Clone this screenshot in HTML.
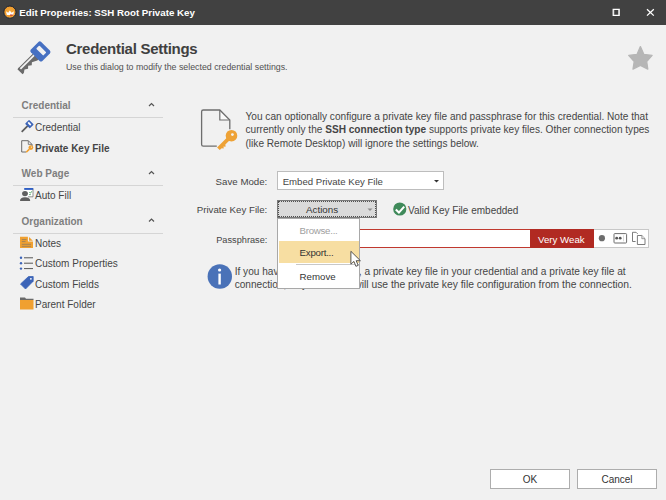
<!DOCTYPE html>
<html><head><meta charset="utf-8">
<style>
html,body{margin:0;padding:0;}
body{width:666px;height:500px;overflow:hidden;background:#f1f1f1;position:relative;font-family:"Liberation Sans",sans-serif;color:#454545;}
.a{position:absolute;white-space:nowrap;}
svg{position:absolute;overflow:visible;}
#tb{left:0;top:0;width:666px;height:25px;background:#414141;}
.t10{font-size:10px;line-height:12px;}
.sh{font-size:10px;line-height:12px;font-weight:bold;color:#7e7e7e;}
.sep{position:absolute;height:1px;background:#d5d5d5;left:13px;width:150px;}
.chev{position:absolute;}
.lbl{font-size:9.7px;line-height:12px;text-align:right;}
</style></head><body>
<div id="tb" class="a"></div>
<!-- app icon -->
<svg style="left:0;top:0" width="30" height="25">
  <defs><radialGradient id="og" cx="0.5" cy="0.45" r="0.55"><stop offset="0" stop-color="#f6ab3c"/><stop offset="0.8" stop-color="#ee9a2c"/><stop offset="1" stop-color="#f5c27a"/></radialGradient></defs>
  <circle cx="9.9" cy="12.1" r="6.1" fill="url(#og)" stroke="#1b2130" stroke-width="1"/>
  <path d="M6 11.2 L8.2 12.8 L9.8 10.6 L11.6 12.8 L14 11.2 L13.2 15 L6.8 15 Z" fill="#fff"/>
  <path d="M10 14.6 L12.9 14.6 L12.6 15.7 L10.2 15.7 Z" fill="#c8402e"/>
</svg>
<div class="a" style="left:19.3px;top:6.2px;font-size:9.72px;line-height:13px;font-weight:bold;color:#fff;">Edit Properties: SSH Root Private Key</div>
<!-- maximize -->
<svg style="left:0;top:0" width="666" height="25">
  <path d="M613.2 9.4 H619.2 V15.3 H613.2 Z" fill="none" stroke="#fff" stroke-width="1.25"/>
  <path d="M613.9 9.8 V14.9 M618.5 9.8 V14.9" stroke="#fff" stroke-width="0.5"/>
  <path d="M647 9.2 L653.8 15.6 M653.8 9.2 L647 15.6" stroke="#fff" stroke-width="1.3"/>
</svg>

<!-- header key icon -->
<svg style="left:0;top:0" width="60" height="80">
  <g transform="translate(40.6 51.65) rotate(-45)">
    <path d="M-7 -4.0 L-28 -4.0 L-28 -3.0 L-7 -3.0 Z" fill="#666"/>
    <path d="M-6 -1.2 L-26.5 -1.2 L-26.5 -4.0 L-28.8 -4.0 L-28.8 3.3 L-27 3.3 L-24 1.2 L-21 3.3 L-18.8 1.2 L-15.8 3.3 L-13.6 1.3 L-8.5 3.9 L-6 3.9 Z" fill="#6b6b6b"/>
    <rect x="-7.3" y="-8.4" width="14.6" height="16.2" rx="2" fill="#4670c2"/>
    <rect x="-1" y="-5.3" width="4.5" height="10" rx="0.8" fill="#f1f1f1"/>
  </g>
</svg>
<div class="a" style="left:66px;top:39.6px;font-size:15px;line-height:17px;font-weight:bold;color:#404040;letter-spacing:-0.28px;">Credential Settings</div>
<div class="a" style="left:66px;top:61.7px;font-size:8.8px;line-height:11px;color:#505050;">Use this dialog to modify the selected credential settings.</div>
<!-- star -->
<svg style="left:0;top:0" width="666" height="80">
  <path d="M640.4 46.6 L643.8 54.3 L652.1 55.4 L646.7 61.5 L647.8 69.1 L640.4 65.5 L633 69.1 L634.2 61.5 L628.7 55.4 L637.1 54.3 Z" fill="#b6b6b6" stroke="#b6b6b6" stroke-width="1.3" stroke-linejoin="round"/>
</svg>

<!-- sidebar -->
<div class="a sh" style="left:21.6px;top:100.3px;">Credential</div>
<svg style="left:0;top:0" width="180" height="320">
  <path d="M149 106 L151.5 103.5 L154 106" fill="none" stroke="#555" stroke-width="1.2"/>
  <path d="M149 174 L151.5 171.5 L154 174" fill="none" stroke="#555" stroke-width="1.2"/>
  <path d="M149 221.5 L151.5 219 L154 221.5" fill="none" stroke="#555" stroke-width="1.2"/>
</svg>
<div class="sep" style="top:117px;"></div>
<svg style="left:0;top:0" width="40" height="320">
  <g transform="translate(29.4 124.1) rotate(-45)">
    <rect x="-11" y="-0.8" width="8.5" height="1.8" fill="#5d5d5d"/>
    <rect x="-2.8" y="-3.3" width="5.6" height="6.6" rx="0.6" fill="#3c64b8"/>
    <rect x="-0.6" y="-2" width="1.8" height="3.6" fill="#fff"/>
  </g>
  <!-- doc small -->
  <path d="M21.7 140.7 L28.3 140.7 L32 144.4 L32 146" fill="none" stroke="#6a6a6a" stroke-width="1"/>
  <path d="M21.7 140.7 L21.7 152 L26 152" fill="none" stroke="#6a6a6a" stroke-width="1"/>
  <path d="M28.3 140.7 L28.3 144.4 L32 144.4" fill="none" stroke="#6a6a6a" stroke-width="0.8"/>
  <circle cx="30.9" cy="147.6" r="2.4" fill="#f0a030"/>
  <circle cx="31.4" cy="147.1" r="0.6" fill="#f1f1f1"/>
  <path d="M29.4 149.1 L26.2 152.3" stroke="#f0a030" stroke-width="1.6"/>
  <path d="M27.3 150 L28.3 151" stroke="#f0a030" stroke-width="1"/>
</svg>
<div class="a t10" style="left:35px;top:122.3px;">Credential</div>
<div class="a t10" style="left:35px;top:142.7px;font-weight:bold;">Private Key File</div>

<div class="a sh" style="left:21.6px;top:167.9px;">Web Page</div>
<div class="sep" style="top:185px;"></div>
<svg style="left:0;top:0" width="40" height="320">
  <rect x="24.2" y="188" width="8.8" height="8.8" fill="#fff"/>
  <path d="M33 188.5 L33 196.8 L28 196.8" fill="none" stroke="#777" stroke-width="0.8"/>
  <rect x="24.2" y="188" width="9" height="1.9" fill="#2f5fc4"/>
  <path d="M29.3 192.4 l1.2 0.4 l1.6 -1.4 M29.2 194.6 l1.5 0" stroke="#3a9a50" stroke-width="0.9" fill="none"/>
  <ellipse cx="25" cy="193.6" rx="2.9" ry="2.6" fill="#5f5f5f"/>
  <path d="M20 200.9 Q20 197.2 25 197.2 Q30.2 197.2 30.2 200.9 Z" fill="#5f5f5f"/>
</svg>
<div class="a t10" style="left:35px;top:190px;">Auto Fill</div>

<div class="a sh" style="left:21.6px;top:215.9px;">Organization</div>
<div class="sep" style="top:233px;"></div>
<svg style="left:0;top:0" width="40" height="320">
  <!-- notes -->
  <path d="M20 236.8 L27.9 236.8 L27.9 241.6 L33 241.6 L33 248 L20 248 Z" fill="#f0a030"/>
  <path d="M29 236.9 L29 240.7 L32.9 240.7 Z" fill="#f0a030"/>
  <path d="M21.8 239.6 H26.5 M21.8 241.6 H25.5 M21.8 244.3 H31 M21.8 246.3 H31" stroke="#9a7f5a" stroke-width="0.9"/>
  <!-- custom props -->
  <circle cx="21" cy="257.8" r="1.2" fill="#3c64b8"/>
  <circle cx="21" cy="263.2" r="1.2" fill="#3c64b8"/>
  <circle cx="21" cy="268.6" r="1.2" fill="#3c64b8"/>
  <path d="M24 257.8 H33 M24 263.2 H33 M24 268.6 H33" stroke="#555" stroke-width="1"/>
  <!-- tag -->
  <path d="M28.5 276.5 L33.2 276.5 L33.2 281.2 L25.5 289 L20.5 284 Z" fill="#3c64b8" stroke="#3c64b8" stroke-width="0.8" stroke-linejoin="round"/>
  <circle cx="30.9" cy="278.8" r="0.9" fill="#fff"/>
  <!-- folder -->
  <path d="M20 297.5 L25 297.5 L26 298.8 L33.5 298.8 L33.5 300 L20 300 Z" fill="#6a6a6a"/>
  <rect x="20" y="300" width="13.5" height="9.5" fill="#f0a030"/>
</svg>
<div class="a t10" style="left:35px;top:237.9px;">Notes</div>
<div class="a t10" style="left:35px;top:258.4px;">Custom Properties</div>
<div class="a t10" style="left:35px;top:278.8px;">Custom Fields</div>
<div class="a t10" style="left:35px;top:299.1px;">Parent Folder</div>

<!-- main doc icon -->
<svg style="left:0;top:0" width="260" height="160">
  <path d="M219.8 110 L229.8 120 L219.8 120 Z" fill="#fafafa"/>
  <path d="M216.8 146.2 L203.3 146.2 Q201.6 146.2 201.6 144.5 L201.6 111.7 Q201.6 110 203.3 110 L219.8 110 L229.8 120 L229.8 129.3" fill="none" stroke="#6e6e6e" stroke-width="1.3"/>
  <path d="M219.8 110 L219.8 120 L229.8 120" fill="none" stroke="#6e6e6e" stroke-width="1.2"/>
  <g transform="translate(231.5 135.7) rotate(135)">
    <path d="M3 1.9 L18.5 1.9 L18.5 -1.9 L15.8 -1.9 L14.6 -3.6 L13.2 -1.9 L12 -3.6 L10.6 -1.9 L3 -1.9 Z" fill="#eea236"/>
  </g>
  <circle cx="231.5" cy="135.7" r="5.8" fill="#eea236"/>
  <circle cx="232.4" cy="134.6" r="1.4" fill="#f4f4f4"/>
</svg>
<div class="a" style="left:245.5px;top:110.2px;font-size:10.1px;line-height:13.2px;color:#454545;">You can optionally configure a private key file and passphrase for this credential. Note that<br>currently only the <b>SSH connection type</b> supports private key files. Other connection types<br>(like Remote Desktop) will ignore the settings below.</div>

<div class="a lbl" style="right:398.7px;top:176px;">Save Mode:</div>
<div class="a" style="left:277px;top:171px;width:164.5px;height:17px;background:#fff;border:1px solid #bdbdbd;"></div>
<div class="a" style="left:282.7px;top:176px;font-size:9.6px;line-height:12px;">Embed Private Key File</div>
<svg style="left:0;top:0" width="666" height="300">
  <path d="M434 180 L439 180 L436.5 182.5 Z" fill="#333"/>
</svg>

<div class="a lbl" style="right:398.7px;top:204px;">Private Key File:</div>
<div class="a" style="left:277px;top:200px;width:98px;height:16px;background:#dadada;border:1px solid #7a7a7a;"></div>
<div class="a" style="left:278px;top:201px;width:98px;height:16px;border:1px dotted #505050;box-sizing:border-box;"></div>
<div class="a" style="left:306px;top:204px;font-size:9.8px;line-height:12px;color:#333;">Actions</div>
<svg style="left:0;top:0" width="666" height="300">
  <path d="M367.5 208.5 L372.5 208.5 L370 211 Z" fill="#8a8a8a"/>
  <circle cx="399.8" cy="209" r="6.6" fill="#3f8a5a"/>
  <path d="M395.8 209.6 L398.9 212.6 L404.2 206.6" fill="none" stroke="#fff" stroke-width="2.1"/>
</svg>
<div class="a" style="left:408px;top:204.8px;font-size:10px;line-height:12px;">Valid Key File embedded</div>

<div class="a lbl" style="right:398.7px;top:234.3px;font-size:9.2px;">Passphrase:</div>
<div class="a" style="left:278px;top:229px;width:252px;height:17px;background:#fff;border:1px solid #c0392f;border-right:none;"></div>
<div class="a" style="left:530px;top:229px;width:63.7px;height:18.6px;background:#b12a22;"></div>
<div class="a" style="left:538px;top:234px;font-size:9.7px;line-height:12px;color:#fff;">Very Weak</div>
<div class="a" style="left:593.7px;top:229px;width:54.3px;height:16.6px;background:#fff;border:1px solid #c8c8c8;border-left:none;"></div>
<svg style="left:0;top:0" width="666" height="300">
  <circle cx="601.9" cy="238.2" r="3.1" fill="#6d6d6d"/>
  <rect x="614" y="233.6" width="12.6" height="9.4" rx="0.8" fill="none" stroke="#6d6d6d" stroke-width="1"/>
  <path d="M623.5 235.3 V241.3" stroke="#d0d0d0" stroke-width="0.8"/>
  <circle cx="616.7" cy="238.2" r="1.4" fill="#555"/>
  <circle cx="620.2" cy="238.2" r="1.4" fill="#555"/>
  <path d="M636 232.3 L632.5 232.3 L632.5 241.5 L635.6 241.5" fill="none" stroke="#6d6d6d" stroke-width="0.9"/>
  <path d="M636 232.3 L638 234" fill="none" stroke="#6d6d6d" stroke-width="0.7"/>
  <path d="M637.4 235.5 L641.8 235.5 L645 238.7 L645 244.5 L637.4 244.5 Z" fill="#fff" stroke="#6d6d6d" stroke-width="0.9"/>
  <path d="M641.8 235.5 L641.8 238.7 L645 238.7" fill="#e6e6e6" stroke="#6d6d6d" stroke-width="0.6"/>
</svg>

<!-- info -->
<svg style="left:0;top:0" width="666" height="300">
  <circle cx="219.8" cy="276.5" r="12.2" fill="#4a72b8"/>
  <circle cx="219.6" cy="270" r="1.6" fill="#fff"/>
  <rect x="218.4" y="273.6" width="2.4" height="10.9" fill="#fff"/>
</svg>
<div class="a" style="left:234.7px;top:266.3px;font-size:10.1px;line-height:12.7px;color:#454545;">If you have configured<br>connection, Royal TS w</div>
<div class="a" style="left:358.8px;top:266.3px;font-size:10.18px;line-height:12.7px;color:#454545;">, a private key file in your credential and a private key file at</div>
<div class="a" style="left:354.3px;top:279px;font-size:10.3px;line-height:12.7px;color:#454545;">will use the private key file configuration from the connection.</div>

<!-- menu -->
<div class="a" style="left:277px;top:218px;width:81px;height:68.5px;background:#fff;border:1px solid #a8a8a8;"></div>
<div class="a" style="left:278.5px;top:241.2px;width:80.5px;height:21.5px;background:#f7dea2;"></div>
<div class="a" style="left:295.5px;top:263.8px;width:63px;height:1px;background:#c8c8c8;"></div>
<div class="a" style="left:299.6px;top:225px;font-size:9.7px;line-height:12px;color:#a0a0a0;letter-spacing:-0.28px;">Browse...</div>
<div class="a" style="left:299.6px;top:247px;font-size:9.7px;line-height:12px;color:#333;letter-spacing:-0.24px;">Export...</div>
<div class="a" style="left:299.6px;top:271px;font-size:9.7px;line-height:12px;color:#333;">Remove</div>
<!-- cursor -->
<svg style="left:0;top:0" width="666" height="300">
  <path d="M350.9 251.3 L350.9 264.2 L353.9 261.4 L355.9 266.3 L358.2 265.4 L356.2 260.7 L360.4 260.7 Z" fill="#fff" stroke="#444" stroke-width="0.9" stroke-linejoin="round"/>
</svg>

<!-- buttons -->
<div class="a" style="left:490px;top:469px;width:78px;height:18px;background:#fff;border:1px solid #adadad;"></div>
<div class="a" style="left:490px;top:473.5px;width:80px;font-size:10px;line-height:12px;text-align:center;color:#333;">OK</div>
<div class="a" style="left:577px;top:469px;width:78px;height:18px;background:#fff;border:1px solid #adadad;"></div>
<div class="a" style="left:577px;top:473.5px;width:80px;font-size:10px;line-height:12px;text-align:center;color:#333;">Cancel</div>
</body></html>
